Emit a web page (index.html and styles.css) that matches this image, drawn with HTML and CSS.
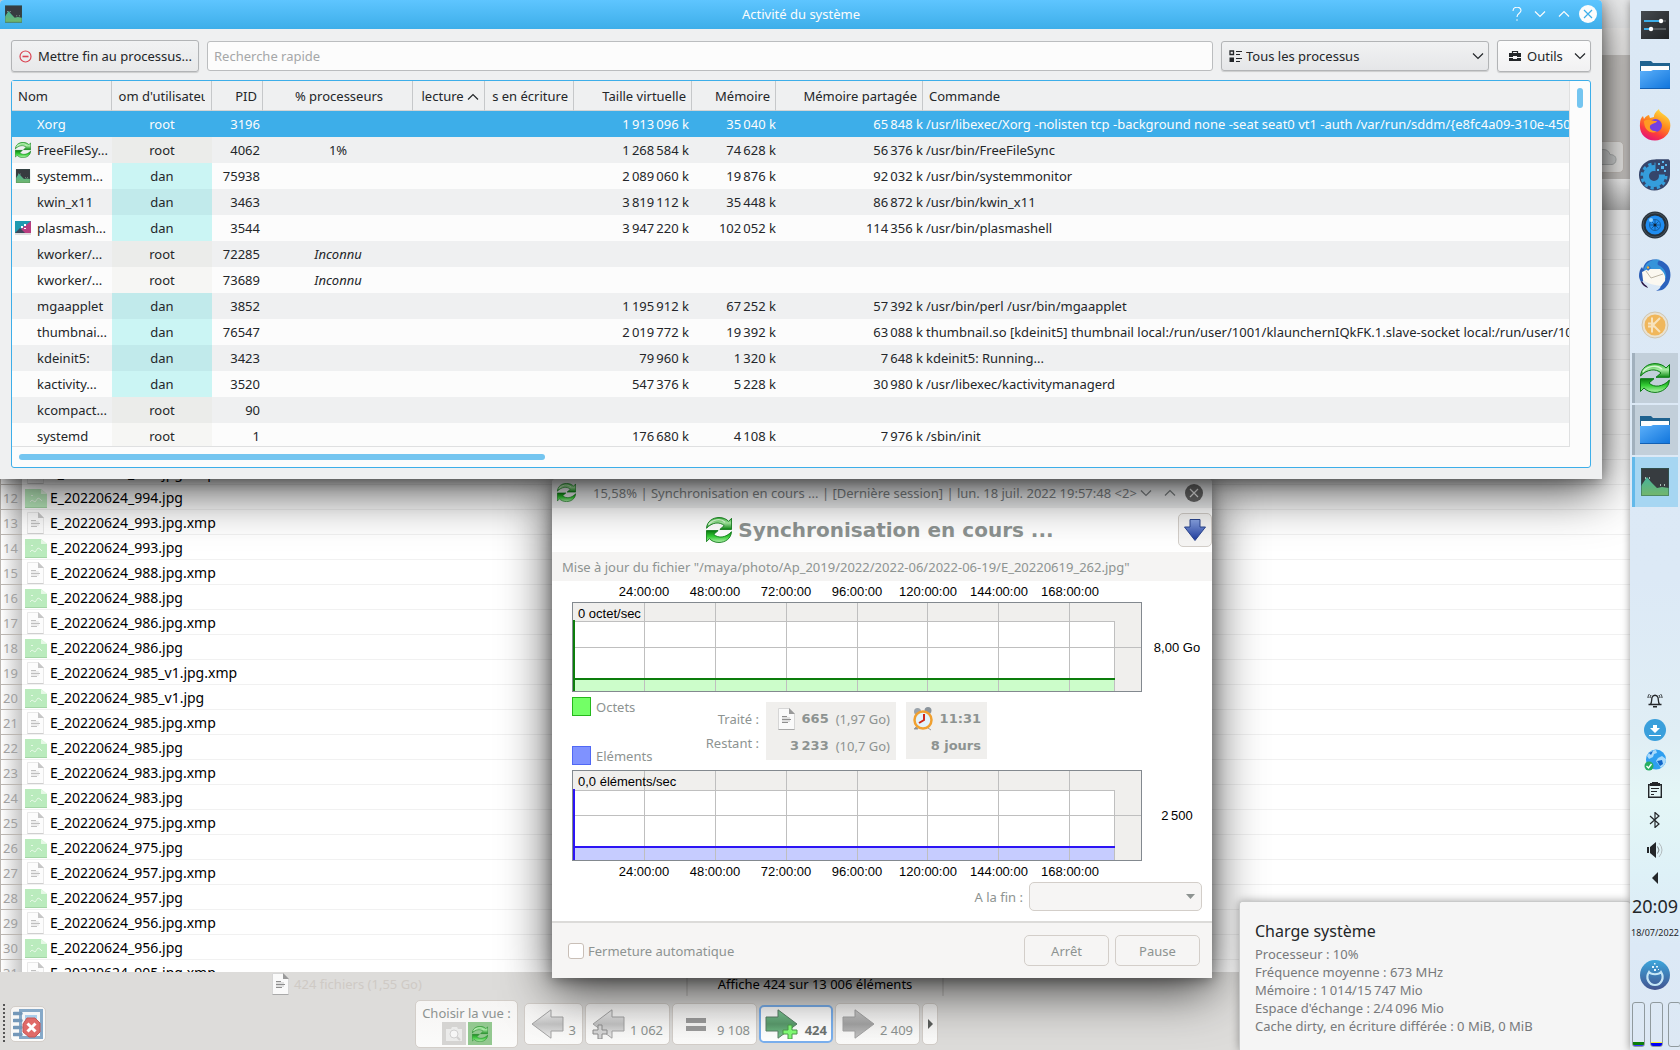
FILE: index.html
```html
<!DOCTYPE html>
<html lang="fr">
<head>
<meta charset="utf-8">
<title>Bureau</title>
<link rel="stylesheet" href="styles.css">
</head>
<body>
<svg class="defs" aria-hidden="true">
  <defs>
    <linearGradient id="gGreen" x1="0" y1="0" x2="0" y2="1"><stop offset="0" stop-color="#3fbf3f"/><stop offset=".45" stop-color="#a8eca4"/><stop offset="1" stop-color="#0c8a12"/></linearGradient>
    <linearGradient id="gGreen2" x1="0" y1="0" x2="0" y2="1"><stop offset="0" stop-color="#0a7d10"/><stop offset=".5" stop-color="#35d035"/><stop offset="1" stop-color="#b5f0b0"/></linearGradient>
    <linearGradient id="gMon" x1="0" y1="0" x2="0" y2="1"><stop offset="0" stop-color="#47b39b"/><stop offset="1" stop-color="#74b66a"/></linearGradient>
    <linearGradient id="gFolder" x1="0" y1="0" x2="1" y2="1"><stop offset="0" stop-color="#5cb0fa"/><stop offset="1" stop-color="#0f74dc"/></linearGradient>
    <linearGradient id="gFox" x1=".8" y1="0" x2=".3" y2="1"><stop offset="0" stop-color="#ffe846"/><stop offset=".45" stop-color="#ff8a1c"/><stop offset=".75" stop-color="#fb3a3e"/><stop offset="1" stop-color="#e3117c"/></linearGradient>
    <linearGradient id="gGrey" x1="0" y1="0" x2="0" y2="1"><stop offset="0" stop-color="#f6f6f6"/><stop offset=".5" stop-color="#c4c4c4"/><stop offset="1" stop-color="#ececec"/></linearGradient>
    <linearGradient id="gDark" x1="0" y1="0" x2="0" y2="1"><stop offset="0" stop-color="#cfcfcf"/><stop offset=".5" stop-color="#a4a4a4"/><stop offset="1" stop-color="#c4c4c4"/></linearGradient>
    <linearGradient id="gArrow" x1="0" y1="0" x2="0" y2="1"><stop offset="0" stop-color="#7fcf9a"/><stop offset=".5" stop-color="#5a9a6c"/><stop offset="1" stop-color="#79cc91"/></linearGradient>
    <linearGradient id="gBlue" x1="0" y1="0" x2="0" y2="1"><stop offset="0" stop-color="#8ba6e6"/><stop offset="1" stop-color="#1d399b"/></linearGradient>
    <linearGradient id="gMga" x1="0" y1="0" x2="0" y2="1"><stop offset="0" stop-color="#3da6dc"/><stop offset="1" stop-color="#42538f"/></linearGradient>
    <linearGradient id="gSlate" x1="0" y1="0" x2="1" y2="1"><stop offset="0" stop-color="#454a4f"/><stop offset="1" stop-color="#1f2225"/></linearGradient>
  </defs>
  <symbol id="sync" viewBox="0 0 30 30">
    <path d="M.6 13C1 5 8 .6 15 .6c5 0 9 2 11 4.400L29.500 1.500V14.300H16l5-4.300C16 5 7 6 .6 13z" fill="url(#gGreen)" stroke="#0b7a14"/>
    <path d="M29.400 17C29 25 22 29.400 15 29.400c-5 0-9-2-11-4.400L.5 28.500V15.700H14l-5 4.300c5 5 14 4 20.400-3z" fill="url(#gGreen2)" stroke="#0b7a14"/>
    <path d="M3 9C7 3 17 1 22 6" fill="none" stroke="#d8f7d4" stroke-width="1.500"/>
  </symbol>
  <symbol id="monitor" viewBox="0 0 28 28">
    <rect width="28" height="28" fill="#373c40"/>
    <path d="M0 28V18L6 9l4 5 6 6 5-1 7 1v8z" fill="url(#gMon)"/>
    <path d="M4 10h1M8 10h1M19 17h1M23 17h1" stroke="#cfe9df" stroke-width="1.500"/>
    <path d="M.5.5h27v27H.5z" fill="none" stroke="#2b5f55" stroke-opacity=".5"/>
  </symbol>
  <symbol id="folder" viewBox="0 0 30 28">
    <path d="M0 0h11l2 2h17v12H0z" fill="#1f628f"/>
    <path d="M1 5h28v8H1z" fill="#fdfdfd"/>
    <path d="M0 10h11l2-1h17v19H0z" fill="url(#gFolder)"/>
    <path d="M0 27h30v1H0z" fill="#1260b4"/>
  </symbol>
  <symbol id="doc" viewBox="0 0 17 22">
    <path d="M.5.500h11l5 5v16H.5z" fill="#fafafa" stroke="#d6d6d6"/>
    <path d="M.5 21.500h16" stroke="#a9a9a9"/><path d="M11 0l6 6h-6z" fill="#9a9a9a"/>
    <path d="M4 8.500h5M4 11.500h9M4 14.500h6" stroke="#8e8e8e"/><path d="M4 10h8M4 13h8" stroke="#c4c4c4"/>
  </symbol>
  <symbol id="pic" viewBox="0 0 22 19">
    <path d="M0 0h16l6 5v14H0z" fill="#baebbd"/><path d="M16 0l6 5h-6z" fill="#e6f8e6"/>
    <path d="M0 18h22v1H0z" fill="#a4d5a6"/>
    <path d="M5 13l2-2 3 2 3-4 2 1 2 2M6 6.500h2" fill="none" stroke="#e8f9e8"/>
  </symbol>
  <symbol id="down" viewBox="0 0 12 8"><path d="M1 1.500l5 5 5-5" fill="none" stroke="currentColor" stroke-width="1.200"/></symbol>
  <symbol id="up" viewBox="0 0 12 8"><path d="M1 6.500l5-5 5 5" fill="none" stroke="currentColor" stroke-width="1.200"/></symbol>
</svg>

<main class="desktop">

  <section class="compare" aria-label="Comparaison">
    <div class="compare-title"></div>
    <div class="compare-menu"></div>
    <div class="compare-tools">
      <button class="cloud" aria-label="Nuage"><svg width="26" height="16" viewBox="0 0 26 16"><path d="M5 15.500a4.500 4.500 0 0 1 0-9C7 2 10 0 13 .6c3 0 5 2 6 5 4 0 6 2 6 5s-2 5-5 5z" fill="#d5d7d7" stroke="#b3b6b6"/></svg></button>
    </div>
    <div class="compare-head"></div>
    <div class="compare-list">
      <table class="files">
        <colgroup><col class="c-num"><col></colgroup>
        <tbody>
          <tr><th></th><td><svg class="i-doc"><use href="#doc"/></svg>E_20220624_994.jpg.xmp</td></tr>
          <tr><th>12</th><td><svg class="i-pic"><use href="#pic"/></svg>E_20220624_994.jpg</td></tr>
          <tr><th>13</th><td><svg class="i-doc"><use href="#doc"/></svg>E_20220624_993.jpg.xmp</td></tr>
          <tr><th>14</th><td><svg class="i-pic"><use href="#pic"/></svg>E_20220624_993.jpg</td></tr>
          <tr><th>15</th><td><svg class="i-doc"><use href="#doc"/></svg>E_20220624_988.jpg.xmp</td></tr>
          <tr><th>16</th><td><svg class="i-pic"><use href="#pic"/></svg>E_20220624_988.jpg</td></tr>
          <tr><th>17</th><td><svg class="i-doc"><use href="#doc"/></svg>E_20220624_986.jpg.xmp</td></tr>
          <tr><th>18</th><td><svg class="i-pic"><use href="#pic"/></svg>E_20220624_986.jpg</td></tr>
          <tr><th>19</th><td><svg class="i-doc"><use href="#doc"/></svg>E_20220624_985_v1.jpg.xmp</td></tr>
          <tr><th>20</th><td><svg class="i-pic"><use href="#pic"/></svg>E_20220624_985_v1.jpg</td></tr>
          <tr><th>21</th><td><svg class="i-doc"><use href="#doc"/></svg>E_20220624_985.jpg.xmp</td></tr>
          <tr><th>22</th><td><svg class="i-pic"><use href="#pic"/></svg>E_20220624_985.jpg</td></tr>
          <tr><th>23</th><td><svg class="i-doc"><use href="#doc"/></svg>E_20220624_983.jpg.xmp</td></tr>
          <tr><th>24</th><td><svg class="i-pic"><use href="#pic"/></svg>E_20220624_983.jpg</td></tr>
          <tr><th>25</th><td><svg class="i-doc"><use href="#doc"/></svg>E_20220624_975.jpg.xmp</td></tr>
          <tr><th>26</th><td><svg class="i-pic"><use href="#pic"/></svg>E_20220624_975.jpg</td></tr>
          <tr><th>27</th><td><svg class="i-doc"><use href="#doc"/></svg>E_20220624_957.jpg.xmp</td></tr>
          <tr><th>28</th><td><svg class="i-pic"><use href="#pic"/></svg>E_20220624_957.jpg</td></tr>
          <tr><th>29</th><td><svg class="i-doc"><use href="#doc"/></svg>E_20220624_956.jpg.xmp</td></tr>
          <tr><th>30</th><td><svg class="i-pic"><use href="#pic"/></svg>E_20220624_956.jpg</td></tr>
          <tr><th>31</th><td><svg class="i-doc"><use href="#doc"/></svg>E_20220624_905.jpg.xmp</td></tr>
        </tbody>
      </table>
    </div>
    <div class="status">
      <span class="status-left"><svg class="i-doc2"><use href="#doc"/></svg>424 fichiers (1,55 Go)</span>
      <span class="status-mid">Affiche 424 sur 13&nbsp;006 éléments</span>
    </div>
    <div class="viewbar">
      <span class="handle"></span>
      <button class="tile tile-log" aria-label="Journal"><svg width="30" height="32" viewBox="0 0 30 32"><path d="M6 1h24v30H6z" fill="#86a9c8"/><path d="M9 4h18v24H9z" fill="#f4f6f8"/><path d="M12 7h12v14H12z" fill="#a9cdea"/><path d="M1 5.500h7M1 12.500h7M1 19.500h7M1 26.500h7" stroke="#7397b8" stroke-width="3.500" stroke-linecap="round"/><path d="M14 10h8l5 5v9l-5 5h-6l-6-5v-8z" fill="#e06a68" stroke="#c65654"/><path d="M14.500 15.500l8 8m0-8l-8 8" stroke="#fff" stroke-width="3"/></svg></button>
      <div class="tile chooser"><span>Choisir la vue :</span>
        <div class="chooser-btns">
          <button class="mini" aria-label="Action"><svg width="18" height="16" viewBox="0 0 18 16"><path d="M1 3h5l1-2h5l1 2h4v12H1z" fill="#f1f1f1"/><circle cx="9" cy="8" r="4" fill="#fff" stroke="#cfcfcf"/><path d="M12 11l3 3" stroke="#cfcfcf" stroke-width="2"/></svg></button>
          <button class="mini on" aria-label="Synchroniser"><svg width="16" height="16"><use href="#sync"/></svg></button>
        </div>
      </div>
      <button class="tile count n59"><svg width="34" height="30" viewBox="0 0 34 30"><path d="M1 15L20 .8V8h12v14H20v7.200z" fill="url(#gGrey)" stroke="#a3a3a3"/></svg>3</button>
      <button class="tile count n85"><svg width="34" height="30" viewBox="0 0 34 30"><path d="M1 15L20 .8V8h12v14H20v7.200z" fill="url(#gGrey)" stroke="#a3a3a3"/><path d="M6 16h4v5h5v4h-5v5H6v-5H1v-4h5z" fill="#d6d6d6" stroke="#8c8c8c"/></svg>1&nbsp;062</button>
      <button class="tile count n85"><svg width="34" height="30" viewBox="0 0 34 30"><path d="M7 9h20v5H7zM7 17h20v5H7z" fill="#9b9b9b"/></svg>9&nbsp;108</button>
      <button class="tile count n74 sel"><svg width="34" height="30" viewBox="0 0 34 30"><path d="M32 15L13 .8V8H1v14h12v7.200z" fill="url(#gArrow)" stroke="#5a7f66"/><path d="M23 16h4v5h5v4h-5v5h-4v-5h-5v-4h5z" fill="#82ff76" stroke="#4c9a4a"/></svg><b>424</b></button>
      <button class="tile count n85"><svg width="34" height="30" viewBox="0 0 34 30"><path d="M32 15L13 .8V8H1v14h12v7.200z" fill="url(#gDark)" stroke="#a3a3a3"/></svg>2&nbsp;409</button>
      <button class="tile n16" aria-label="Plus"><svg width="5" height="10"><path d="M0 0l5 5-5 5z" fill="#5c5f5d"/></svg></button>
    </div>
  </section>

  <section class="win sync" aria-label="Synchronisation">
    <header class="sync-title">
      <svg width="19" height="19"><use href="#sync"/></svg>
      <h2>15,58% | Synchronisation en cours ... | [Dernière session] | lun. 18 juil. 2022 19:57:48 &lt;2&gt;</h2>
      <button aria-label="Réduire"><svg width="12" height="8"><use href="#down"/></svg></button>
      <button aria-label="Agrandir"><svg width="12" height="8"><use href="#up"/></svg></button>
      <button class="close" aria-label="Fermer"><svg width="18" height="18" viewBox="0 0 18 18"><circle cx="9" cy="9" r="9" fill="#6a6a6a"/><path d="M5 5l8 8m0-8l-8 8" stroke="#eee" stroke-width="1.200"/></svg></button>
    </header>
    <div class="sync-head">
      <svg class="logo" width="26" height="26"><use href="#sync"/></svg>
      <h1>Synchronisation en cours ...</h1>
      <button class="minimize" aria-label="Masquer"><svg width="22" height="22" viewBox="0 0 22 22"><path d="M6 .5h10V8h5.500L11 21.500.5 8H6z" fill="url(#gBlue)" stroke="#2a448f"/></svg></button>
    </div>
    <p class="sync-path">Mise à jour du fichier "/maya/photo/Ap_2019/2022/2022-06/2022-06-19/E_20220619_262.jpg"</p>
    <svg class="graph" width="660" height="114">
      <g class="tick" text-anchor="middle"><text x="92" y="15">24:00:00</text><text x="163" y="15">48:00:00</text><text x="234" y="15">72:00:00</text><text x="305" y="15">96:00:00</text><text x="376" y="15">120:00:00</text><text x="447" y="15">144:00:00</text><text x="518" y="15">168:00:00</text><text x="625" y="71">8,00 Go</text></g>
      <path d="M20.500 21.500h569v89h-569z" fill="#f0efed"/>
      <path d="M21 41h542v57H21z" fill="#fff"/><path d="M21 98h542v12H21z" fill="#ccfdca"/>
      <path class="rule" d="M21 40.500h541.500V110M21 66.500h569M92.500 22v88M163.500 22v88M234.500 22v88M305.500 22v88M375.500 22v88M446.500 22v88M517.500 22v88"/>
      <path class="frame" d="M20.500 21.500h569v89h-569z"/>
      <path d="M22 39v71M21 98h542" stroke="#0c7d0c" stroke-width="2"/>
      <text class="tick" x="26" y="37">0 octet/sec</text>
    </svg>
    <div class="sync-mid">
      <ul class="legend">
        <li><i class="sw green"></i>Octets</li>
        <li><i class="sw blue"></i>Eléments</li>
      </ul>
      <div class="labels"><span>Traité :</span><span>Restant :</span></div>
      <div class="stat stat-count">
        <div><svg class="i-doc2"><use href="#doc"/></svg><b>665</b><span>(1,97 Go)</span></div>
        <div><b>3&#8239;233</b><span>(10,7 Go)</span></div>
      </div>
      <div class="stat stat-time">
        <div><svg width="20" height="24" viewBox="0 0 20 24"><circle cx="4.500" cy="4.500" r="3.500" fill="#9aa3ab"/><circle cx="15" cy="3.500" r="3.500" fill="#8b949c"/><path d="M3 20l-2 2h4zM15 21l3 2" fill="#888" stroke="#999"/><circle cx="10" cy="13" r="8.500" fill="#e3f3fb" stroke="#f0a030" stroke-width="2.500"/><path d="M11 7v6l-5 3" fill="none" stroke="#d02818" stroke-width="2"/></svg><b>11:31</b></div>
        <div><b>8 jours</b></div>
      </div>
    </div>
    <svg class="graph" width="660" height="116">
      <path d="M20.500 4.500h569v90h-569z" fill="#f0efed"/>
      <path d="M21 25h542v57H21z" fill="#fff"/><path d="M21 81h542v13H21z" fill="#c6ccff"/>
      <path class="rule" d="M21 24.500h541.500V94M21 49.500h569M92.500 5v89M163.500 5v89M234.500 5v89M305.500 5v89M375.500 5v89M446.500 5v89M517.500 5v89"/>
      <path class="frame" d="M20.500 4.500h569v90h-569z"/>
      <path d="M22 23v71M21 81h542" stroke="#2c14f5" stroke-width="2"/>
      <text class="tick" x="26" y="20">0,0 éléments/sec</text>
      <g class="tick" text-anchor="middle"><text x="92" y="110">24:00:00</text><text x="163" y="110">48:00:00</text><text x="234" y="110">72:00:00</text><text x="305" y="110">96:00:00</text><text x="376" y="110">120:00:00</text><text x="447" y="110">144:00:00</text><text x="518" y="110">168:00:00</text><text x="625" y="54">2&#8239;500</text></g>
    </svg>
    <div class="sync-end">
      <label for="fin">A la fin :</label>
      <span class="combo"><select id="fin"><option></option></select><svg width="9" height="5"><path d="M0 0h9L4.500 5z" fill="#8d9391"/></svg></span>
    </div>
    <footer class="sync-foot">
      <label class="check"><input type="checkbox">Fermeture automatique</label>
      <button>Arrêt</button>
      <button>Pause</button>
    </footer>
  </section>

  <section class="win activity" aria-label="Activité du système">
    <header class="act-title">
      <svg width="17" height="18"><use href="#monitor"/></svg>
      <h2>Activité du système</h2>
      <div class="act-btns">
        <button aria-label="Aide"><svg width="10" height="14" viewBox="0 0 10 14"><path d="M1 4c0-5 8-5 8-.5C9 6.500 5 6 5 10M5 12.300v1.500" fill="none" stroke="currentColor" stroke-width="1.100"/></svg></button>
        <button aria-label="Réduire"><svg width="12" height="8"><use href="#down"/></svg></button>
        <button aria-label="Agrandir"><svg width="12" height="8"><use href="#up"/></svg></button>
        <button class="close" aria-label="Fermer"><svg width="18" height="18" viewBox="0 0 18 18"><circle cx="9" cy="9" r="9" fill="#fcfcfc"/><path d="M5 5l8 8m0-8l-8 8" stroke="#3daee9" stroke-width="1.200"/></svg></button>
      </div>
    </header>
    <div class="act-tools">
      <button class="kbtn kill"><svg width="13" height="13" viewBox="0 0 13 13"><circle cx="6.500" cy="6.500" r="5.500" fill="none" stroke="#da4453" stroke-width="1.200"/><path d="M3.500 6.500h6" stroke="#da4453" stroke-width="1.600"/></svg>Mettre fin au processus...</button>
      <input class="search" type="text" placeholder="Recherche rapide" aria-label="Recherche rapide">
      <span class="kselect"><svg width="13" height="13" viewBox="0 0 13 13"><path d="M1 1h3.500v3.500H1z" fill="none" stroke="#232629" stroke-width="1.300"/><path d="M.5 7.500H5V12H.5z" fill="#232629"/><path d="M7 1.500h6M7 4.500h4M7 8.500h6M7 11.500h4" stroke="#232629"/></svg><select aria-label="Filtre"><option>Tous les processus</option></select><svg width="12" height="8"><use href="#down"/></svg></span>
      <button class="kbtn tools"><svg width="12" height="12" viewBox="0 0 12 12"><path d="M3.500 3V1.500h5V3" fill="none" stroke="#232629" stroke-width="1.200"/><path d="M0 3h12v4H8V6H4v1H0zM0 8h4v1h4V8h4v3H0z" fill="#232629"/></svg><span>Outils</span><svg width="12" height="8"><use href="#down"/></svg></button>
    </div>
    <div class="frame-box">
      <div class="viewport">
        <table class="procs">
          <colgroup><col class="w100"><col class="w100"><col class="w51"><col class="w150"><col class="w72"><col class="w89"><col class="w118"><col class="w84"><col class="w147"><col></colgroup>
          <thead><tr><th class="l">Nom</th><th><div class="clip">Nom d'utilisateur</div></th><th class="r">PID</th><th class="c">% processeurs</th><th class="r">lecture <svg width="12" height="8"><use href="#up"/></svg></th><th class="r"><div class="clip end">s en écriture</div></th><th class="r">Taille virtuelle</th><th class="r">Mémoire</th><th class="r">Mémoire partagée</th><th class="l last">Commande</th></tr></thead>
          <tbody>
            <tr class="cur"><td>Xorg</td><td>root</td><td>3196</td><td></td><td></td><td></td><td>1&#8239;913&#8239;096 k</td><td>35&#8239;040 k</td><td>65&#8239;848 k</td><td>/usr/libexec/Xorg -nolisten tcp -background none -seat seat0 vt1 -auth /var/run/sddm/{e8fc4a09-310e-4502</td></tr>
            <tr><td><svg width="16" height="16"><use href="#sync"/></svg>FreeFileSy...</td><td>root</td><td>4062</td><td>1%</td><td></td><td></td><td>1&#8239;268&#8239;584 k</td><td>74&#8239;628 k</td><td>56&#8239;376 k</td><td>/usr/bin/FreeFileSync</td></tr>
            <tr><td><svg class="low" width="16" height="14"><use href="#monitor"/></svg>systemm...</td><td class="me">dan</td><td>75938</td><td></td><td></td><td></td><td>2&#8239;089&#8239;060 k</td><td>19&#8239;876 k</td><td>92&#8239;032 k</td><td>/usr/bin/systemmonitor</td></tr>
            <tr><td>kwin_x11</td><td class="me">dan</td><td>3463</td><td></td><td></td><td></td><td>3&#8239;819&#8239;112 k</td><td>35&#8239;448 k</td><td>86&#8239;872 k</td><td>/usr/bin/kwin_x11</td></tr>
            <tr><td><svg class="low" width="16" height="14" viewBox="0 0 16 14"><path d="M0 0h16v14H0z" fill="#1f9ab0"/><path d="M16 0v14H8L6 8z" fill="#b93d80"/><path d="M0 12l5-5 5 5z" fill="#3d4a5c"/><path d="M9 3h2v2H9zM6 5h2v2H6zM9 7h2v1H9z" fill="#fff"/><path d="M0 12h16v2H0z" fill="#ddd"/></svg>plasmash...</td><td class="me">dan</td><td>3544</td><td></td><td></td><td></td><td>3&#8239;947&#8239;220 k</td><td>102&#8239;052 k</td><td>114&#8239;356 k</td><td>/usr/bin/plasmashell</td></tr>
            <tr><td>kworker/...</td><td>root</td><td>72285</td><td><i>Inconnu</i></td><td></td><td></td><td></td><td></td><td></td><td></td></tr>
            <tr><td>kworker/...</td><td>root</td><td>73689</td><td><i>Inconnu</i></td><td></td><td></td><td></td><td></td><td></td><td></td></tr>
            <tr><td>mgaapplet</td><td class="me">dan</td><td>3852</td><td></td><td></td><td></td><td>1&#8239;195&#8239;912 k</td><td>67&#8239;252 k</td><td>57&#8239;392 k</td><td>/usr/bin/perl /usr/bin/mgaapplet</td></tr>
            <tr><td>thumbnai...</td><td class="me">dan</td><td>76547</td><td></td><td></td><td></td><td>2&#8239;019&#8239;772 k</td><td>19&#8239;392 k</td><td>63&#8239;088 k</td><td>thumbnail.so [kdeinit5] thumbnail local:/run/user/1001/klaunchernIQkFK.1.slave-socket local:/run/user/100</td></tr>
            <tr><td>kdeinit5:</td><td class="me">dan</td><td>3423</td><td></td><td></td><td></td><td>79&#8239;960 k</td><td>1&#8239;320 k</td><td>7&#8239;648 k</td><td>kdeinit5: Running...</td></tr>
            <tr><td>kactivity...</td><td class="me">dan</td><td>3520</td><td></td><td></td><td></td><td>547&#8239;376 k</td><td>5&#8239;228 k</td><td>30&#8239;980 k</td><td>/usr/libexec/kactivitymanagerd</td></tr>
            <tr><td>kcompact...</td><td>root</td><td>90</td><td></td><td></td><td></td><td></td><td></td><td></td><td></td></tr>
            <tr><td>systemd</td><td>root</td><td>1</td><td></td><td></td><td></td><td>176&#8239;680 k</td><td>4&#8239;108 k</td><td>7&#8239;976 k</td><td>/sbin/init</td></tr>
          </tbody>
        </table>
      </div>
      <div class="vbar"><i></i></div>
      <div class="hbar"><i></i></div>
    </div>
  </section>

  <aside class="tip">
    <h3>Charge système</h3>
    <p>Processeur : 10%</p>
    <p>Fréquence moyenne : 673 MHz</p>
    <p>Mémoire : 1&#8239;014/15&#8239;747 Mio</p>
    <p>Espace d'échange : 2/4&#8239;096 Mio</p>
    <p>Cache dirty, en écriture différée : 0 MiB, 0 MiB</p>
  </aside>

  <nav class="panel" aria-label="Tableau de bord">
    <button aria-label="Configuration"><svg width="28" height="28" viewBox="0 0 28 28"><path d="M0 0h28v28H0z" fill="url(#gSlate)"/><path d="M3 10h22M3 18h22" stroke="#555a5e" stroke-width="2"/><path d="M3 10h15M3 18h5" stroke="#3daee9" stroke-width="2"/><circle cx="20" cy="10" r="2.200" fill="#fff"/><circle cx="10" cy="18" r="2.200" fill="#fff"/></svg></button>
    <button aria-label="Dossiers"><svg width="30" height="28"><use href="#folder"/></svg></button>
    <button aria-label="Firefox"><svg width="32" height="32" viewBox="0 0 32 32"><path d="M15 8c0-4 3-6 5-8 0 4 8 6 10.500 11.500C34 22 26 31.500 16 31.500S0 24 1 15c0-4 1-6 3-8l1 3c2-3 4-4 5-4l1 3z" fill="url(#gFox)"/><circle cx="16.500" cy="16.500" r="6.500" fill="#7540e0"/><path d="M5 12c4-3 8 0 13 0-1 3-6 2-7 5s3 6 7 5c-5 4-13 0-13-10z" fill="#ff9a22"/></svg></button>
    <button aria-label="Centre de contrôle"><svg width="32" height="32" viewBox="0 0 32 32"><path d="M16 .5h13q2 0 2 2V16A15.500 15.500 0 1 1 16 .5z" fill="#35456b"/><circle cx="15" cy="17" r="8" fill="none" stroke="#359ddb" stroke-width="6"/><circle cx="15" cy="17" r="12" fill="none" stroke="#359ddb" stroke-width="3" stroke-dasharray="3.300 3"/><path d="M16.500.500h13.500v15H16.500z" fill="#35456b"/><path d="M19 4h2v2h-2zM23 2h2v2h-2zM22 7h3v3h-3zM26 5h2v2h-2zM18 10h2v2h-2zM25 11h2v2h-2z" fill="#5cb8ee"/></svg></button>
    <button aria-label="Objectif"><svg width="28" height="28" viewBox="0 0 28 28"><circle cx="14" cy="14" r="13.500" fill="#27313a"/><circle cx="14" cy="14" r="12" fill="none" stroke="#46515b"/><circle cx="14" cy="14" r="9.500" fill="#1f8df2"/><circle cx="14" cy="14" r="5.500" fill="none" stroke="#175f9f"/><path d="M14 9v10M9 14h10M10.500 10.500l7 7m0-7l-7 7" stroke="#175f9f"/><circle cx="14" cy="14" r="1.500" fill="#123"/><circle cx="10" cy="9" r="2" fill="#8fd0ff"/></svg></button>
    <button aria-label="Thunderbird"><svg width="32" height="32" viewBox="0 0 32 32"><path d="M9 2C14-1 24 0 29 7c5 8 2 20-6 24l-6 1c4-2 5-4 5-7L4 12C4 7 6 4 9 2z" fill="#2b62bd"/><path d="M5 12C5 4 14-1 21 1c-2 1-3 3-2 5 5 2 9 7 8 13L14 12z" fill="#3594da"/><path d="M0 17c0-4 1-7 3-9l2 4-1 10-2 1c-1-2-2-4-2-6z" fill="#2a5cb4"/><path d="M3 13l6-3h12c4 3 6 7 5 12l-4 5c-6-1-13-2-18-6z" fill="#fbf8f0"/><path d="M7 12l5 7 12-4" fill="none" stroke="#bdb6a6"/><path d="M3 22c2 4 5 4 6 7-3-1-6-3-7-6z" fill="#2a1645"/><path d="M7 9l3-3 2 3-3 3z" fill="#2f6fc6"/><circle cx="9" cy="8.500" r="1.200" fill="#f1b33a"/></svg></button>
    <button aria-label="KMyMoney"><svg width="28" height="28" viewBox="0 0 28 28"><circle cx="14" cy="14" r="13" fill="#e9e2d2" stroke="#cfc6b2"/><circle cx="14" cy="14" r="10.500" fill="#f0b75c"/><path d="M11 6.500v15M19 7l-7 7 7 7M7 12.500h6M7 15.500h6" fill="none" stroke="#f7e3bd" stroke-width="2"/></svg></button>
    <div class="tasks">
      <button class="task" aria-label="FreeFileSync"><svg width="30" height="30"><use href="#sync"/></svg></button>
      <button class="task" aria-label="Dolphin"><svg width="30" height="28"><use href="#folder"/></svg></button>
      <button class="task active" aria-label="Activité"><svg width="28" height="28"><use href="#monitor"/></svg></button>
    </div>
    <div class="tray">
      <button aria-label="Notifications"><svg width="16" height="16" viewBox="0 0 16 16"><path d="M1.500 12.500h13M3.500 12.500c1.500-2 1-5 1.500-7 1-3 5-3 6 0 .5 2 0 5 1.500 7" fill="none" stroke="#232629" stroke-width="1.300"/><path d="M6 14h4v1.500H6z" fill="#232629"/><path d="M1 6c0-2 .5-3 1.500-4M3 6c0-1 .5-2 1-3M15 6c0-2-.5-3-1.500-4M13 6c0-1-.5-2-1-3" fill="none" stroke="#232629"/></svg></button>
      <button aria-label="Mises à jour"><svg width="22" height="22" viewBox="0 0 22 22"><circle cx="11" cy="11" r="11" fill="#3a9fdb"/><path d="M9 6h4v3h3l-5 5-5-5h3z" fill="#fff"/><path d="M5 16.500h12" stroke="#fff"/></svg></button>
      <button aria-label="Réseau"><svg width="22" height="22" viewBox="0 0 22 22"><circle cx="12" cy="10.500" r="10" fill="#2f9ff0"/><path d="M3 7c2-4 5-6 9-6l1 3-3 1-1 3-4 2zM14 9l4-2 4 3c0 4-2 7-5 9l-2-3-3-4z" fill="#a9dafb"/><path d="M5 4l4-2-2 4zM13 12l5-1 1 4-3 2z" fill="#1166c9"/><circle cx="5" cy="17" r="4.500" fill="#27ae60"/><path d="M2.500 17l2 2 3-4" fill="none" stroke="#fff" stroke-width="1.300"/></svg></button>
      <button aria-label="Presse-papiers"><svg width="16" height="16" viewBox="0 0 16 16"><path d="M1.700 2.700h12.600v12.600H1.700z" fill="none" stroke="#232629" stroke-width="1.400"/><path d="M3 1h2V0h6v1h2v3H3z" fill="#232629"/><path d="M4 6.500h8M4 9.500h6M4 12.500h3" stroke="#232629"/></svg></button>
      <button aria-label="Bluetooth"><svg width="12" height="16" viewBox="0 0 12 16"><path d="M1 4l9 8-4 3.500V.5L10 4l-9 8" fill="none" stroke="#232629" stroke-width="1.200"/></svg></button>
      <button aria-label="Volume"><svg width="16" height="16" viewBox="0 0 16 16"><path d="M0 5h2v6H0zM3 5l6-5v16l-6-5z" fill="#232629"/><path d="M10.500 4.500q3 3.500 0 7" fill="none" stroke="#7b8083"/><path d="M12 1q6 7 0 14" fill="none" stroke="#b3babd"/></svg></button>
      <button class="expand" aria-label="Afficher plus"><svg width="6" height="12"><path d="M6 0v12L0 6z" fill="#232629"/></svg></button>
      <time class="clock">20:09</time>
      <span class="date">18/07/2022</span>
      <button class="mga" aria-label="Mageia"><svg width="30" height="30" viewBox="0 0 30 30"><circle cx="15" cy="15" r="15" fill="url(#gMga)"/><path d="M9 12c-4 6 0 13 6 13s10-7 6-13c-2 3-10 3-12 0z" fill="none" stroke="#c5e5f5" stroke-width="2.200"/><path d="M14 9h2v2h-2zM12 6h2v2h-2zM16 6h2v1.500h-2zM14 3h1.500v1.500H14zM18 9h1v1h-1z" fill="#e6f5fc"/></svg></button>
      <div class="meters"><span class="meter cpu"></span><span class="meter mem"></span><span class="meter"></span></div>
    </div>
  </nav>
</main>
</body>
</html>
```
FILE: styles.css
```css
* { box-sizing: border-box; }
body {
  margin: 0;
  font: 13px/18px "Noto Sans", "Open Sans", sans-serif;
  color: #232629;
}
h1, h2, h3, p, ul { margin: 0; padding: 0; font-weight: 400; }
button, input, select { font: inherit; color: inherit; margin: 0; }
button { padding: 0; border: 0; background: none; }
select { appearance: none; border: 0; background: none; flex: 1; min-width: 0; padding: 0; opacity: 1; }
.defs { position: absolute; width: 0; height: 0; }
svg { flex: none; display: block; }

.desktop { position: relative; height: 100vh; overflow: hidden; background: #dce9f5; }
.win { position: absolute; box-shadow: 0 12px 50px rgba(0,0,0,.72), 0 2px 14px rgba(0,0,0,.35); }

/* comparison window in the background */
.compare {
  position: absolute; inset: 0 50px 0 0;
  display: flex; flex-direction: column;
  background: #dddcda;
}
.compare-title { height: 28px; background: #eff0f1; }
.compare-menu { height: 27px; background: #f6f5f4; }
.compare-tools { height: 124px; background: #d0cdca; display: flex; justify-content: flex-end; align-items: flex-end; padding: 6px; }
.cloud {
  width: 64px; height: 32px; padding: 0 6px; border: 1px solid #cdc7c2; border-radius: 5px; background: #f2f1ef;
  display: flex; align-items: center; justify-content: flex-end;
}
.compare-head { height: 31px; background: linear-gradient(#fff, #bdbdbd); }
.compare-list {
  flex: 1; min-height: 0; overflow: hidden; padding-top: 250px;
  background: repeating-linear-gradient(#fff 0 24px, #f1f1f1 24px 25px);
}
.files { width: 100%; table-layout: fixed; border-collapse: separate; border-spacing: 0; color: #000; }
.c-num { width: 22px; }
.files th {
  height: 25px; padding: 2px 0 0 2px; font-weight: 400; text-align: left; color: #a0a0a0;
  border-left: 1px solid #bab5b0; border-bottom: 1px solid #bab5b0;
  background: linear-gradient(90deg, #fff, #c8c8c8);
}
.files td { padding: 2px 0 0 28px; height: 25px; font-size: 14px; white-space: nowrap; }
.files td svg { float: left; height: 22px; margin-top: -2px; opacity: .55; }
.files .i-pic { width: 22px; height: 19px; margin: 0 0 0 -25px; opacity: 1; }
.files .i-doc { width: 17px; margin-left: -23px; }
.i-doc2 { width: 17px; height: 22px; }
.status { height: 26px; display: flex; align-items: center; padding-bottom: 2px; }
.status-left { width: 686px; padding-left: 8px; display: flex; gap: 5px; justify-content: center; align-items: center; color: #cfcac5; }
.status-mid { width: 258px; text-align: center; color: #000; border: 2px solid #cac8c6; border-width: 0 2px; line-height: 24px; }
.viewbar { height: 52px; display: flex; align-items: center; gap: 2px; color: #8d9391; }
.handle { width: 2px; height: 40px; margin: 0 3px; background: repeating-linear-gradient(#555 0 2px, transparent 2px 4px); }
.tile {
  height: 42px; border: 1px solid #d3cec9; border-radius: 5px; background: linear-gradient(#f6f5f4, #fbfbfa);
  display: flex; align-items: center; justify-content: space-between; padding: 0 6px; white-space: nowrap;
}
.tile-log { width: 36px; height: 36px; padding: 0 2px; }
.chooser { width: 103px; height: 48px; margin: 0 4px 0 367px; flex-direction: column; padding: 3px 6px 2px; justify-content: flex-start; }
.chooser-btns { display: flex; gap: 2px; }
.mini { width: 24px; height: 23px; background: #d5d4d2; display: flex; align-items: center; justify-content: center; }
.mini svg { opacity: .8; }
.mini.on { background: #93c890; }
.n59 { width: 59px; } .n85 { width: 85px; } .n74 { width: 74px; } .n16 { width: 16px; }
.count { align-items: flex-end; padding-bottom: 5px; }
.n16 { justify-content: center; }
.sel { background: #fff; border: 2px solid #7ab0ee; color: #6e7472; height: 38px; padding: 0 4px 2px; }

/* synchronisation dialog */
.sync { left: 552px; top: 479px; width: 660px; background: #fff; border-radius: 4px 4px 0 0; color: #8d9391; }
.sync-title { height: 29px; padding: 0 5px 2px; display: flex; align-items: center; gap: 12px; background: #eff0f1; border-radius: 4px 4px 0 0; color: #7d8284; }
.sync-title h2 { flex: 1; min-width: 0; padding-left: 5px; font-size: 13px; white-space: nowrap; }
.close { margin-left: -3px; }
.sync-head { height: 44px; display: flex; align-items: center; justify-content: center; gap: 6px; padding-left: 36px; }
.sync-head h1 { font: bold 20px/28px "DejaVu Sans", sans-serif; flex: none; }
.logo { margin-left: auto; }
.minimize { width: 34px; height: 34px; margin-left: auto; border: 1px solid #d3cec9; border-radius: 5px; background: #f6f5f4; display: flex; align-items: center; justify-content: center; }
.sync-title .close { margin-right: 4px; }
.sync-path { height: 29px; line-height: 31px; padding: 0 10px; background: #f5f4f3; white-space: nowrap; }
.graph { shape-rendering: crispEdges; }
.tick { font: 13px "Liberation Sans", Arial, sans-serif; fill: #000; }
.rule { fill: none; stroke: #bfbfbf; }
.frame { fill: none; stroke: #83898f; }
.sync-mid { height: 71px; display: flex; align-items: flex-start; padding: 2px 20px 0; }
.legend { list-style: none; width: 130px; display: flex; flex-direction: column; gap: 30px; }
.legend li { display: flex; gap: 5px; height: 19px; line-height: 21px; }
.sw { width: 19px; height: 19px; border: 1px solid; }
.sw.green { background: #73ff66; border-color: #26b81c; }
.sw.blue { background: #7f92ff; border-color: #5068f5; }
.labels { width: 57px; margin: 10px 7px 0 0; display: flex; flex-direction: column; align-items: flex-end; line-height: 24px; white-space: nowrap; }
.stat { background: #f0efed; margin: 5px 10px 0 0; padding: 3px 6px 0; }
.stat b { font: bold 13px/18px "DejaVu Sans", sans-serif; }
.stat div { height: 27px; display: flex; align-items: center; justify-content: flex-end; gap: 7px; }
.stat-count { width: 130px; height: 58px; }
.stat-time { width: 81px; height: 57px; }
.sync-end { height: 39px; display: flex; align-items: center; justify-content: flex-end; gap: 6px; padding: 0 10px 10px 0; }
.combo { width: 173px; height: 29px; border: 1px solid #d3cec9; border-radius: 5px; background: #f6f5f4; display: flex; align-items: center; padding: 0 6px; }
.sync-foot { height: 57px; border-top: 2px solid #dcdbd9; background: #f6f5f4; display: flex; align-items: center; gap: 6px; padding: 0 12px 0 16px; }
.check { flex: 1; display: flex; align-items: center; gap: 4px; }
.check input { appearance: none; width: 16px; height: 16px; border: 1px solid #c9bfb7; border-radius: 3px; background: #fff; }
.sync-foot button { width: 85px; height: 31px; border: 1px solid #d3cec9; border-radius: 5px; }

/* system activity */
.activity { left: 0; top: 0; width: calc(100% - 78px); background: #eff0f1; border-radius: 4px 4px 0 0; padding-bottom: 11px; }
.act-title {
  height: 29px; padding: 0 5px 2px; display: grid; grid-template-columns: 1fr auto 1fr; align-items: center;
  background: linear-gradient(#5ec5ff, #3daee9); border-radius: 4px 4px 0 0; color: #fcfcfc;
}
.act-title h2 { font-size: 13px; }
.act-btns { display: flex; justify-content: flex-end; align-items: center; gap: 12px; }
.act-tools { display: flex; align-items: center; gap: 8px; padding: 11px 11px 8px; }
.kbtn {
  height: 32px; border: 1px solid #b2b4b6; border-radius: 3px; background: linear-gradient(#f1f2f3, #e8e9ea);
  box-shadow: 0 1px 1px rgba(0,0,0,.15); display: flex; align-items: center; white-space: nowrap;
}
.kill { width: 188px; padding: 0 7px; gap: 6px; }
.search { flex: 1; height: 30px; min-width: 0; border: 1px solid #bbbdbf; border-radius: 3px; background: #fcfcfc; padding: 0 6px; }
.search::placeholder { color: #a5a7a8; opacity: 1; }
.kselect { width: 268px; height: 30px; border: 1px solid #b2b4b6; border-radius: 3px; background: linear-gradient(#f1f2f3, #e5e6e8); box-shadow: 0 1px 1px rgba(0,0,0,.15); display: flex; align-items: center; gap: 4px; padding: 0 4px 0 7px; }
.tools { width: 94px; padding: 0 4px 0 11px; gap: 6px; background: linear-gradient(#fcfcfc, #f1f1f2); }
.tools span { flex: 1; text-align: left; }
.frame-box {
  margin: 0 11px; border: 1px solid #3daee9; border-radius: 3px; background: #fcfcfc;
  display: grid; grid-template-columns: 1fr 20px; grid-template-rows: 366px 20px;
}
.viewport { overflow: hidden; border: solid #dfe0e1; border-width: 0 1px 1px 0; }
.vbar { padding: 7px; }
.vbar i { display: block; width: 6px; height: 20px; border-radius: 3px; background: #74c5f0; }
.hbar { grid-column: 1 / -1; padding: 7px; }
.hbar i { display: block; width: 526px; height: 6px; border-radius: 3px; background: #74c5f0; }
.procs { width: 100%; table-layout: fixed; border-collapse: separate; border-spacing: 0; }
.w100 { width: 100px; } .w51 { width: 51px; } .w150 { width: 150px; } .w72 { width: 72px; } .w89 { width: 89px; }
.w118 { width: 118px; } .w84 { width: 84px; } .w147 { width: 147px; }
.procs th {
  height: 30px; padding: 0 5px; font-weight: 400; background: #eff0f1; white-space: nowrap; overflow: hidden;
  border-right: 1px solid #c6c8ca; border-bottom: 1px solid #d2d4d5;
}
.procs th.l { padding-left: 6px; text-align: left; }
.procs th.c { padding-left: 8px; }
.procs th.last { border-right: 0; }
.procs th svg { display: inline-block; }
.r { text-align: right; }
.clip { display: flex; justify-content: center; overflow: hidden; margin: 0 1px; }
.clip.end { justify-content: flex-end; margin: 0; }
.procs td { height: 26px; padding: 0 2px; white-space: nowrap; overflow: hidden; text-align: right; }
.procs tr:nth-child(even) td { background: #eff0f1; }
.procs td:first-child { padding-left: 25px; text-align: left; }
.procs td:first-child svg { float: left; margin: 1px 0 0 -22px; }
.procs td:first-child svg.low { margin-top: 2px; }
.procs td:nth-child(2), .procs td:nth-child(4) { text-align: center; }
.procs td:nth-child(2) { background: #f6f6f4; }
.procs tr:nth-child(even) td:nth-child(2) { background: #ebecea; }
.procs tr:nth-child(odd) td.me { background: #cbf5f4; }
.procs tr:nth-child(even) td.me { background: #c1eaeb; }
.procs td:last-child { text-align: left; padding: 0 0 0 3px; }
.procs tr.cur td, .procs tr.cur td:nth-child(2) { background: #3daee9; color: #fcfcfc; }
.procs td:nth-child(7) { padding-right: 3px; }
.procs td:nth-child(3) { padding-right: 3px; }
.procs td:nth-child(8), .procs td:nth-child(9) { padding-right: 0; }

/* tooltip of the load monitor */
.tip {
  position: absolute; right: 50px; bottom: 0; width: 391px; height: 149px; padding: 17px 15px 0;
  background: #f5f5f5; border: 1px solid #c9caca; border-width: 1px 0 0 1px; border-radius: 3px 3px 0 0; box-shadow: 0 0 8px rgba(0,0,0,.35); color: #77797b;
}
.tip h3 { font-size: 16px; line-height: 24px; margin-bottom: 2px; color: #232629; }

/* desktop panel */
.panel {
  position: absolute; top: 0; right: 0; bottom: 0; width: 50px; display: flex; flex-direction: column; overflow: hidden;
  background: linear-gradient(#dbe8f5, #dce9f6 55%, #e0eef5 70%, #e4f6f6 76%, #def1f7 83%, #dce9f6 90%, #dde8f4);
  box-shadow: 0 0 8px rgba(0,0,0,.4);
}
.panel button { height: 50px; flex: none; display: flex; align-items: center; justify-content: center; }
.tasks { display: flex; flex-direction: column; gap: 2px; margin: 3px 2px; }
.panel .task { background: #c2cfda; border: solid #a1b0bd; border-width: 0 0 0 3px; padding-right: 3px; }
.panel .task.active { background: #a6d6f2; border-color: #62b9ea; }
.tray { margin-top: auto; display: flex; flex-direction: column; }
.panel .tray button { height: 30px; }
.panel .tray .expand { height: 26px; }
.clock { font-size: 18px; line-height: 30px; text-align: center; }
.date { font-size: 9px; line-height: 24px; text-align: center; }
.panel .tray .mga { height: 60px; }
.meters { display: flex; gap: 5px; height: 45px; margin: -3px 0 3px 2px; }
.meter { flex: none; width: 13px; border: 1px solid #909a9e; border-radius: 3px; }
.cpu { background: linear-gradient(transparent 39px, #0a7d0a 39px 42px, #3b3bff 42px); }
.mem { background: linear-gradient(transparent 39px, #f3f03a 39px 40px, #0000f5 40px); }
```
